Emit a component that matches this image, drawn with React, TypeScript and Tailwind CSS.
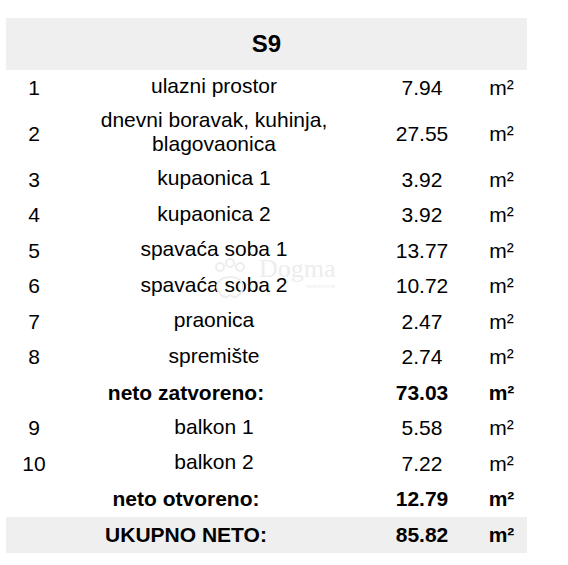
const rows: { n?: string; label: string[]; value: string; bold?: boolean; shade?: boolean; h?: string }[] = [
  { n: '1', label: ['ulazni prostor'], value: '7.94' },
  { n: '2', label: ['dnevni boravak, kuhinja,', 'blagovaonica'], value: '27.55', h: 'h-[56.5px]' },
  { n: '3', label: ['kupaonica 1'], value: '3.92' },
  { n: '4', label: ['kupaonica 2'], value: '3.92' },
  { n: '5', label: ['spavaća soba 1'], value: '13.77' },
  { n: '6', label: ['spavaća soba 2'], value: '10.72' },
  { n: '7', label: ['praonica'], value: '2.47' },
  { n: '8', label: ['spremište'], value: '2.74' },
  { label: ['neto zatvoreno:'], value: '73.03', bold: true },
  { n: '9', label: ['balkon 1'], value: '5.58' },
  { n: '10', label: ['balkon 2'], value: '7.22' },
  { label: ['neto otvoreno:'], value: '12.79', bold: true },
  { label: ['UKUPNO NETO:'], value: '85.82', bold: true, shade: true },
];

// faint agency watermark that sits over the table
function Watermark() {
  return (
    <>
      <svg
        className="pointer-events-none absolute left-[212px] top-[258px]"
        width="36"
        height="44"
        viewBox="0 0 36 44"
        fill="none"
        stroke="#ededed"
        strokeWidth="2"
      >
        <circle cx="8" cy="9" r="4" />
        <circle cx="18" cy="5" r="4" />
        <circle cx="28" cy="9" r="4" />
        <path d="M6 25c4-8 20-8 24 0c3 6-2 12-6 14c-3 1-5-2-6-2s-3 3-6 2c-4-2-9-8-6-14z" />
      </svg>
      <span className="pointer-events-none absolute left-[259px] top-[256px] font-['Liberation_Serif',serif] text-[26px] leading-none text-[#ededed]">
        Dogma
      </span>
      <span className="pointer-events-none absolute left-[306px] top-[283px] font-['Liberation_Sans',sans-serif] text-[6px] leading-none tracking-wide text-[#ededed]">
        nekretnine
      </span>
    </>
  );
}

export default function App() {
  return (
    <div className="relative h-[565px] w-[568px] bg-white pl-[6px] pt-[18px] font-['Liberation_Sans',Arial,sans-serif] text-[21px] leading-[24px] text-black">
      <div className="w-[521px]">
        <div className="flex h-[52px] items-center justify-center bg-[#efefef] text-[24px] font-bold">S9</div>
        {rows.map((r, i) => (
          <div
            key={i}
            className={`grid grid-cols-[56px_304px_112px_49px] items-center ${r.h ?? 'h-[35.5px]'} ${r.shade ? 'bg-[#efefef]' : ''} ${r.bold ? 'font-bold' : ''}`}
          >
            {r.n ? (
              <>
                <div className="text-center">{r.n}</div>
                <div className="-mt-[3px] text-center">
                  {r.label.map((l) => (
                    <div key={l}>{l}</div>
                  ))}
                </div>
              </>
            ) : (
              <div className="col-span-2 text-center">{r.label[0]}</div>
            )}
            <div className="text-center">{r.value}</div>
            <div className="pr-[2px] text-center">m²</div>
          </div>
        ))}
      </div>
      <Watermark />
    </div>
  );
}
